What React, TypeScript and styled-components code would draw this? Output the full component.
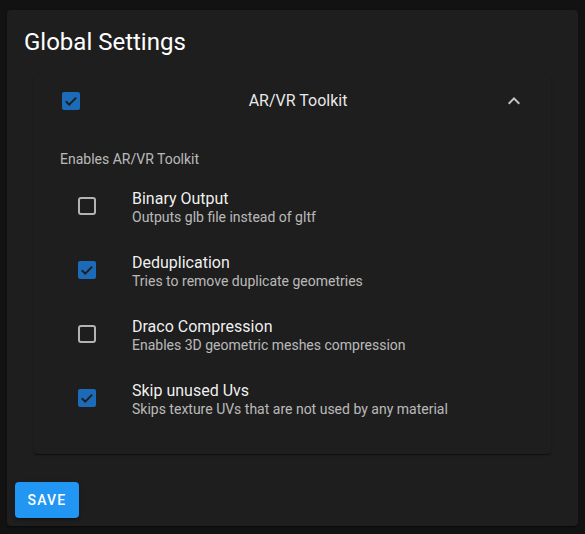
import React from "react";
import styled, { createGlobalStyle } from "styled-components";

const Global = createGlobalStyle`
  html, body { margin: 0; padding: 0; background: #121212; }
  body { font-family: Roboto, "Liberation Sans", sans-serif; color: rgba(255,255,255,0.87); }
`;

const Page = styled.div`
  width: 585px;
  height: 534px;
  padding: 10px 7px 8px 7px;
  box-sizing: border-box;
`;

const Card = styled.div`
  background: #1e1e1e;
  border-radius: 4px;
  height: 516px;
  display: flex;
  flex-direction: column;
  box-shadow: 0 2px 1px -1px rgba(0,0,0,0.2), 0 1px 1px 0 rgba(0,0,0,0.14), 0 1px 3px 0 rgba(0,0,0,0.12);
`;

const Title = styled.h1`
  margin: 0;
  padding: 16px 17px 16px 17px;
  font-size: 24px;
  font-weight: 400;
  line-height: 32px;
  color: #fff;
`;

const Content = styled.div`
  padding: 2px 27px 0 27px;
`;

const Accordion = styled.div`
  background: #1e1e1e;
  border-radius: 4px;
  box-shadow: 0 2px 1px -1px rgba(0,0,0,0.25), 0 1px 1px 0 rgba(0,0,0,0.18), 0 1px 3px 0 rgba(0,0,0,0.16);
`;

const Summary = styled.div`
  height: 50px;
  display: grid;
  grid-template-columns: 1fr auto 1fr;
  align-items: center;
  padding: 0 25px 0 28px;
`;

const SummaryTitle = styled.div`
  font-size: 16px;
  line-height: 24px;
  margin-left: 8px;
  color: rgba(255,255,255,0.92);
`;

const Chevron = styled.div`
  justify-self: end;
  display: flex;
  align-items: center;
  color: rgba(255,255,255,0.75);
`;

const Details = styled.div`
  padding: 23px 0 24px 26px;
`;

const Caption = styled.div`
  font-size: 14px;
  line-height: 20px;
  color: rgba(255,255,255,0.7);
  margin-bottom: 5px;
`;

const List = styled.div`
  display: flex;
  flex-direction: column;
`;

const Row = styled.div`
  height: 64px;
  display: flex;
  align-items: center;
  padding-left: 18px;
`;

const BoxWrap = styled.div`
  width: 18px;
  display: flex;
  margin-right: 36px;
`;

const TextCol = styled.div`
  display: flex;
  flex-direction: column;
  margin-top: 1px;
`;

const Primary = styled.div`
  font-size: 16px;
  line-height: 20px;
  color: rgba(255,255,255,0.95);
`;

const Secondary = styled.div`
  font-size: 14px;
  line-height: 16px;
  color: rgba(255,255,255,0.7);
`;

const Actions = styled.div`
  margin-top: auto;
  padding: 8px;
`;

const SaveButton = styled.button`
  width: 64px;
  height: 36px;
  border: none;
  border-radius: 4px;
  background: #2196f3;
  color: #fff;
  font-family: Roboto, "Liberation Sans", sans-serif;
  font-size: 14px;
  font-weight: 500;
  letter-spacing: 1.2px;
  padding: 0;
  box-shadow: 0 3px 1px -2px rgba(0,0,0,0.2), 0 2px 2px 0 rgba(0,0,0,0.14), 0 1px 5px 0 rgba(0,0,0,0.12);
`;

const CheckBox = ({ checked }: { checked: boolean }) =>
  checked ? (
    <svg width="18" height="18" viewBox="0 0 18 18">
      <rect x="0" y="0" width="18" height="18" rx="2" fill="#1c6bb8" />
      <path d="M3.8 9.2 L7.2 12.6 L14.2 5.6" fill="none" stroke="#1e1e1e" strokeWidth="2" />
    </svg>
  ) : (
    <svg width="18" height="18" viewBox="0 0 18 18">
      <rect x="1" y="1" width="16" height="16" rx="2" fill="none" stroke="#b3b3b3" strokeWidth="2" />
    </svg>
  );

const items = [
  { title: "Binary Output", desc: "Outputs glb file instead of gltf", checked: false },
  { title: "Deduplication", desc: "Tries to remove duplicate geometries", checked: true },
  { title: "Draco Compression", desc: "Enables 3D geometric meshes compression", checked: false },
  { title: "Skip unused Uvs", desc: "Skips texture UVs that are not used by any material", checked: true },
];

export default function App() {
  return (
    <>
      <Global />
      <Page>
        <Card>
          <Title>Global Settings</Title>
          <Content>
            <Accordion>
              <Summary>
                <BoxWrap>
                  <CheckBox checked />
                </BoxWrap>
                <SummaryTitle>AR/VR Toolkit</SummaryTitle>
                <Chevron>
                  <svg width="24" height="24" viewBox="0 0 24 24">
                    <path d="M12 8l-6 6 1.41 1.41L12 10.83l4.59 4.58L18 14z" fill="currentColor" />
                  </svg>
                </Chevron>
              </Summary>
              <Details>
                <Caption>Enables AR/VR Toolkit</Caption>
                <List>
                  {items.map((it) => (
                    <Row key={it.title}>
                      <BoxWrap>
                        <CheckBox checked={it.checked} />
                      </BoxWrap>
                      <TextCol>
                        <Primary>{it.title}</Primary>
                        <Secondary>{it.desc}</Secondary>
                      </TextCol>
                    </Row>
                  ))}
                </List>
              </Details>
            </Accordion>
          </Content>
          <Actions>
            <SaveButton>SAVE</SaveButton>
          </Actions>
        </Card>
      </Page>
    </>
  );
}
